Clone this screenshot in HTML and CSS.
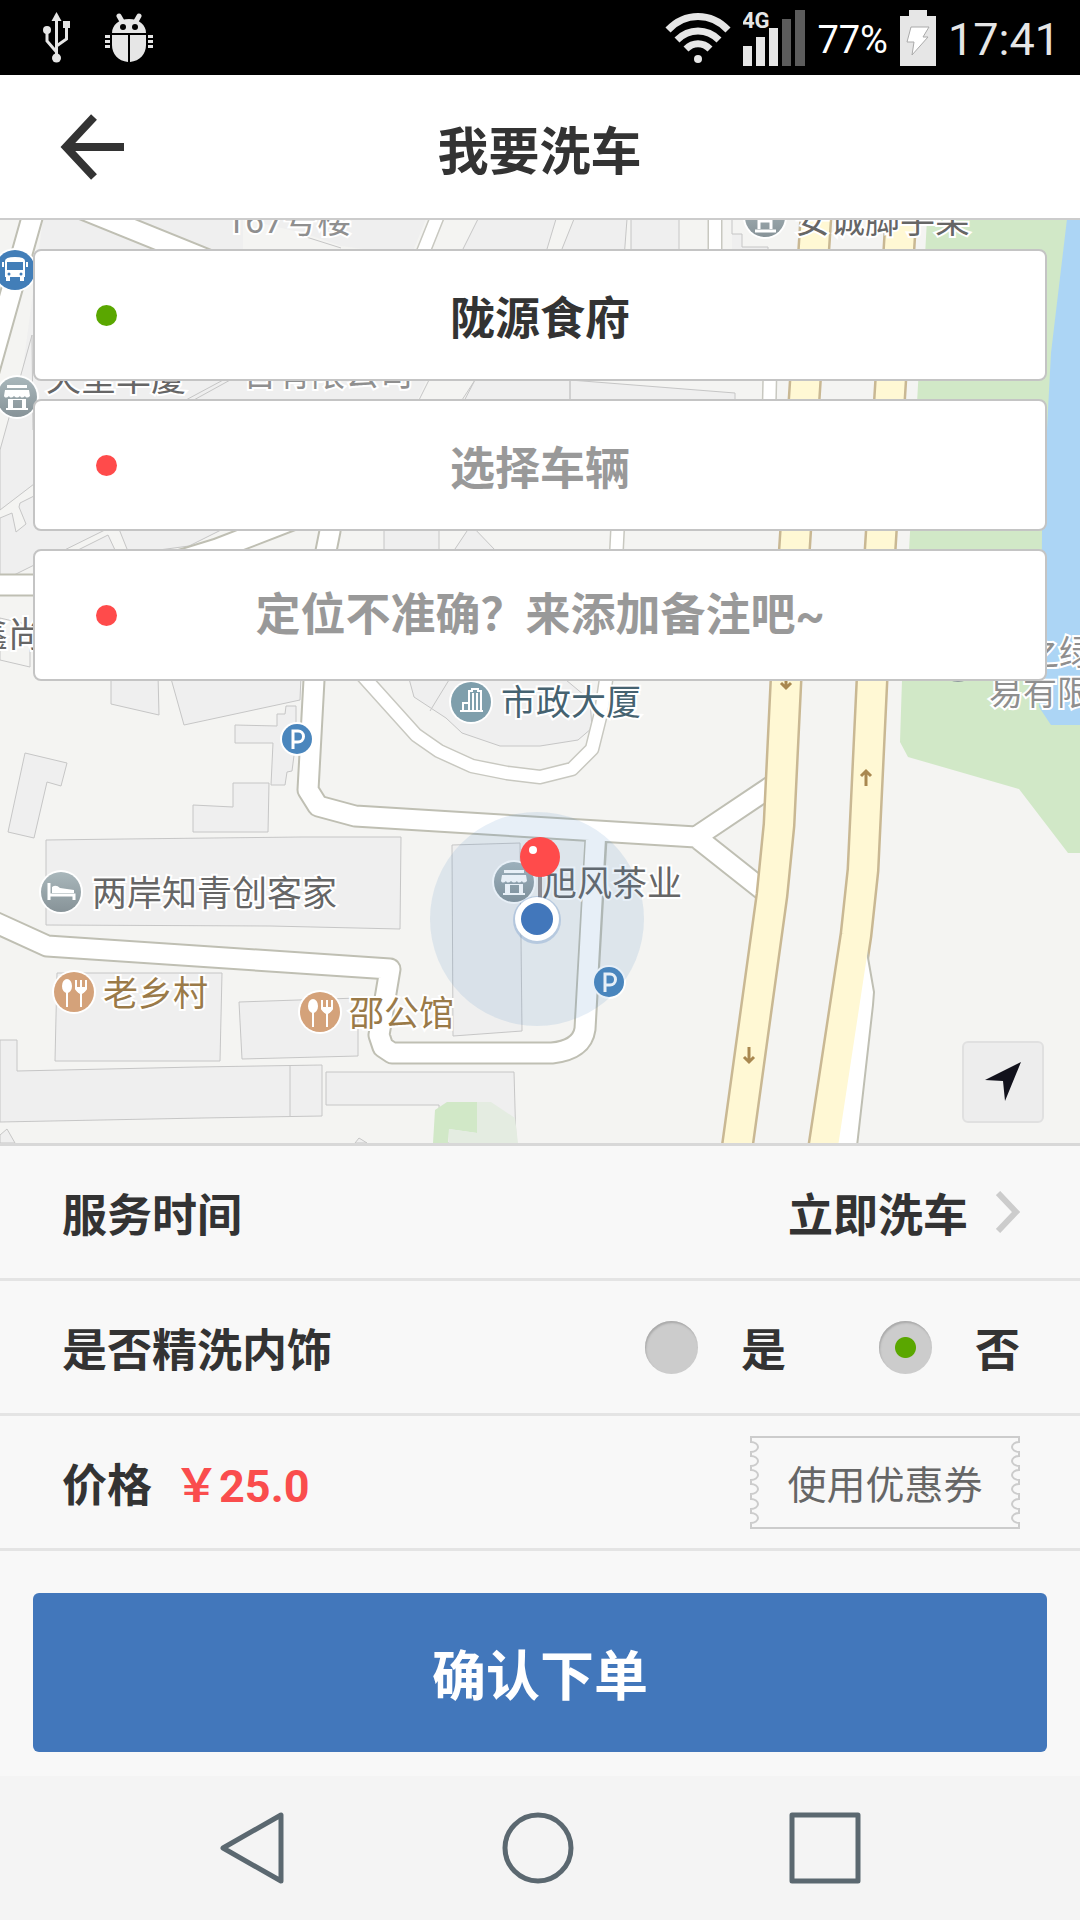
FILE: index.html
```html
<!DOCTYPE html>
<html lang="zh-CN">
<head>
  <meta charset="UTF-8">
  <meta name="viewport" content="width=device-width, initial-scale=1">
  <title>我要洗车</title>
  <link rel="stylesheet" href="styles.css">
</head>
<body>

<div class="status-bar">
  <div class="status-group">
    <svg class="usb-icon" width="28" height="52" viewBox="0 0 28 52" fill="none" stroke="#e6e6e6" stroke-width="3">
      <path d="M13.500 46V8M4 18v11l9.500 11M23.500 13v14L13.500 34"/>
      <g fill="#e6e6e6" stroke="none">
        <path d="M13.500 0l5 9h-10z"/>
        <circle cx="4" cy="18" r="4"/>
        <rect x="20" y="9" width="7" height="7"/>
        <circle cx="13.500" cy="46" r="4.500"/>
      </g>
    </svg>
    <svg width="48" height="50" viewBox="0 0 48 50">
      <g fill="#e6e6e6">
        <path d="M7 20C7 12 14 6 24 6s17 6 17 14z"/>
        <path d="M14 3l4 7M34 3l-4 7" stroke="#e6e6e6" stroke-width="5" stroke-linecap="round"/>
        <path d="M7 22h16v27C13 48 7 41 7 32zM25 22h16v10c0 9-6 16-16 17z"/>
        <path d="M0 22h5v3H0zM0 27h5v3H0zM0 32h5v3H0zM43 22h5v3h-5zM43 27h5v3h-5zM43 32h5v3h-5z"/>
      </g>
      <circle cx="18" cy="14" r="3"/>
      <circle cx="30" cy="14" r="3"/>
    </svg>
  </div>
  <div class="status-group status-right">
    <svg width="66" height="52" viewBox="0 0 66 52" fill="none" stroke="#e6e6e6" stroke-width="7">
      <path d="M3 18C20 0 46 0 63 18M12 28c12-12 30-12 42 0M21 37c7-7 17-7 24 0"/>
      <circle cx="33" cy="47" r="4" fill="#e6e6e6" stroke="none"/>
    </svg>
    <svg width="62" height="56" viewBox="0 0 62 56">
      <path d="M0 36h9v20H0zM13 27h9v29h-9zM26 18h9v38h-9z" fill="#e6e6e6"/>
      <path d="M39 9h9v47h-9zM52 0h10v56H52z" fill="#5c5c5c"/>
      <text class="network" x="-1" y="18">4G</text>
    </svg>
    <span class="battery-level">77%</span>
    <svg width="36" height="56" viewBox="0 0 36 56">
      <path d="M9 0h18v6h9v50H0V6h9z" fill="#e6e6e6"/>
      <path d="M11 17h18l-6 10h5L12 45l2-13H7z" fill="#fff" stroke="#aaa" stroke-width="1"/>
    </svg>
    <span class="clock">17:41</span>
  </div>
</div>

<header class="header">
  <button class="back" type="button" aria-label="返回">
    <svg width="64" height="66" viewBox="0 0 64 66" fill="none" stroke="#333" stroke-width="8">
      <path d="M34 3L6 33l28 30M8 33h56"/>
    </svg>
  </button>
  <h1>我要洗车</h1>
</header>

<section class="map">
  <svg class="map-canvas" viewBox="0 220 1080 923" preserveAspectRatio="xMidYMin slice">
    <defs>
      <linearGradient id="grey" x1="0" y1="0" x2="0" y2="1">
        <stop offset="0" stop-color="#a9b7bb"/>
        <stop offset="1" stop-color="#879398"/>
      </linearGradient>
      <g id="shop">
        <circle r="22" fill="#fff"/>
        <circle r="20" fill="url(#grey)"/>
        <path d="M-10-12h20v3h-20zM-12-7h24l1 6c-2 2-4 2-5 0-2 2-4 2-5 0-2 2-4 2-6 0-2 2-4 2-5 0-2 2-4 2-5 0zM-9 2H9v9H5V3H-4v8h-5zM-11 11H11v2H-11z" fill="#fff"/>
      </g>
      <g id="food">
        <circle r="22" fill="#fff"/>
        <circle r="20" fill="#d4a27a"/>
        <ellipse cx="-7" cy="-6" rx="5" ry="7" fill="#fff"/>
        <path d="M-7 0v15M7 0v15M2-12v9q5 7 10 0v-9M7-12v12" fill="none" stroke="#fff" stroke-width="2"/>
        <path d="M2-5h10q-1 7-5 7t-5-7z" fill="#fff"/>
      </g>
      <g id="parking">
        <circle r="17" fill="#fff"/>
        <circle r="15" fill="#4a86bd"/>
        <path d="M-4 10V-8h5a5 5 0 0 1 0 11h-5" fill="none" stroke="#fff" stroke-width="3"/>
      </g>
      <path id="oneway" d="M0-8V7M-5 2l5 5 5-5" fill="none" stroke="#a98850" stroke-width="3"/>
    </defs>

    <rect y="220" width="1080" height="923" fill="#f4f4f2"/>

    <!-- buildings -->
    <g fill="#efefef" stroke="#c6c6c6" stroke-width="1">
      <path d="M43 219h383l-15 37-70-10-38-13-60-14v140l-30 60H30l-10-30z" stroke="none"/>
      <path d="M303 236l38 12M478 219l-25 50h88l15-50zM574 219l-16 40h66l3-40M631 219v50h48v-50"/>
      <path d="M732 219v15h10v13h26v60H732"/>
      <path d="M60 375h369l-14 30H60z" stroke="none"/>
      <path d="M184 401l41-22M192 401l40-22M429 380l-10 20M475 380l-13 20"/>
      <path d="M32 335L0 450v60l34-26v12L20 503l-1 4 7 17-10 8-4-19-12 5v57h14l103-51 12 30 60-8 40-20V430H33z"/>
      <path d="M78 550l30-15 7 15"/>
      <path d="M475 380l-13 25h108v-25zM570 380l165 13v12H570z"/>
      <path d="M384 525h55v30h-55zM451 555l20-30 24 25"/>
      <path d="M111 675v29l48 11-1-40zM170 675l14 50 116-25 1-25z"/>
      <path d="M286 706h10v34l-4 31-5 1-2 13h-14l2-42h-38v-18l42 1v-12h8z"/>
      <path d="M25 753l42 10-6 23-14-4-13 56-26-6zM193 805l40 2v-24h36l-1 49h-75z"/>
      <path d="M408 675l6 22 32 21 16 15 38 13h40l38-6 14-12-2-28-30-25zM430 711l22-36"/>
      <path d="M46 840l78-1 178-2h99l-1 92-130-3-224-1zM452 845l68-2 2 188-69 5z"/>
      <path d="M57 973h165l-2 88H55zM239 1002l119-4v58l-116 3z"/>
      <path d="M0 1040h17v31l180-4 125-2v51l-120 2L0 1122zM290 1065v51M326 1072h188l2 71H440l-1-38H326z"/>
      <path d="M0 1135l7-6 8 14H0zM355 1143l4-5 8 5z"/>
      <path d="M0 618l30 7v42l-30-7z" fill="none"/>
    </g>

    <!-- park and water -->
    <path d="M927 219h153v634h-12l-49-64-111-32-8-15 2-62z" fill="#d1e8c7"/>
    <path d="M1067 219h13v506h-29l-12-18 2-27 1-149 6-121 3-57z" fill="#acd5f5"/>
    <path d="M435 1110l12-8h30v31l-28-4-1 14h-15z" fill="#d1e8c7"/>
    <path d="M477 1102h14l24 16 3 25h-69v-14l28 4z" fill="#e4ece1"/>

    <!-- small streets -->
    <g fill="none" stroke-linejoin="round">
      <path d="M446 195l-32 80M715 210v50M770 370l-1 45M618 520l-2 40-10 120-5 33-9 36-20 20-32 8-33-4-35-7-33-15-23-16-54-60-60-62" stroke="#c8c8c0" stroke-width="15"/>
      <path d="M446 195l-32 80M715 210v50M770 370l-1 45M618 520l-2 40-10 120-5 33-9 36-20 20-32 8-33-4-35-7-33-15-23-16-54-60-60-62" stroke="#fff" stroke-width="12"/>
    </g>

    <!-- streets: casing first, then fill -->
    <g fill="none" stroke-linejoin="round">
      <path d="M37 200L-15 385M60 200l200 81M-10 585h110l117-36 83-32M333 500l-3 31-4 20-12 129-6 110 10 16 37 10 341 21 76-51M696 837l67 53M-10 920l57 26 343 23-11 66 4 12 9 6h160q30-3 33-24l11-190" stroke="#bfbfb3" stroke-width="23"/>
      <path d="M37 200L-15 385M60 200l200 81M-10 585h110l117-36 83-32M333 500l-3 31-4 20-12 129-6 110 10 16 37 10 341 21 76-51M696 837l67 53M-10 920l57 26 343 23-11 66 4 12 9 6h160q30-3 33-24l11-200" stroke="#fff" stroke-width="19"/>
    </g>

    <!-- main road -->
    <g fill="none">
      <path d="M817 200l-31 480-7 145-7 70-40 290M902 200l-30 480-9 190-7 65-38 250" stroke="#c9b893" stroke-width="33"/>
      <path d="M867 952l7 40-1 13-17 150h-26l26-203z" fill="#fff" stroke="#bfbfb3" stroke-width="2"/>
      <path d="M817 200l-31 480-7 145-7 70-40 290M902 200l-30 480-9 190-7 65-38 250" stroke="#fff8d4" stroke-width="28"/>
    </g>
    <use href="#oneway" x="786" y="681"/>
    <use href="#oneway" x="749" y="1055"/>
    <use href="#oneway" transform="translate(866 778) rotate(180)"/>

    <!-- places -->
    <g class="place">
      <text class="faint" x="226" y="233">167号楼</text>
      <text x="795" y="233">安诚脚手架</text>
      <text x="46" y="391">天堂华厦</text>
      <text class="faint" x="243" y="386">台有限公司</text>
      <text x="-27" y="647">鑫尚</text>
      <text class="office" x="501" y="715">市政大厦</text>
      <text x="92" y="906">两岸知青创客家</text>
      <text x="542" y="896">旭风茶业</text>
      <text class="dining" x="103" y="1006">老乡村</text>
      <text class="dining" x="349" y="1026">邵公馆</text>
      <text class="faint" x="1025" y="665">之绿</text>
      <text class="faint" x="989" y="705">易有限</text>
    </g>
    <g>
      <circle cx="765" cy="217" r="22" fill="#fff"/>
      <circle cx="765" cy="217" r="20" fill="url(#grey)"/>
      <path d="M759 215v14M771 215v14M755 231h21M759 221h12" fill="none" stroke="#fff" stroke-width="3"/>
    </g>
    <circle cx="958" cy="660" r="22" fill="#8f999d"/>
    <g>
      <circle cx="15" cy="270" r="22" fill="#fff"/>
      <circle cx="15" cy="270" r="20" fill="#427eb8"/>
      <path d="M5 261q0-4 10-4t10 4v16h-1v4h-4v-4H10v4H6v-4H5z" fill="#fff"/>
      <path d="M7 262h16v8H7z" fill="#427eb8"/>
      <circle cx="9" cy="274" r="1.500" fill="#427eb8"/>
      <circle cx="21" cy="274" r="1.500" fill="#427eb8"/>
      <path d="M3 262v5M27 262v5" stroke="#fff" stroke-width="2"/>
    </g>
    <use href="#shop" x="17" y="397"/>
    <use href="#shop" x="514" y="882"/>
    <g>
      <circle cx="471" cy="702" r="22" fill="#fff"/>
      <circle cx="471" cy="702" r="20" fill="#7f9fac"/>
      <path d="M460 711h23M463 710v-7h6M469 711v-20h3v-2h6v2h3v20M473 693v17M477 693v17" fill="none" stroke="#fff" stroke-width="2"/>
    </g>
    <g>
      <circle cx="61" cy="892" r="22" fill="#fff"/>
      <circle cx="61" cy="892" r="20" fill="url(#grey)"/>
      <path d="M49 883v17M49 895h25v5" fill="none" stroke="#fff" stroke-width="3"/>
      <path d="M52 887q4-3 8 1l14 2v3H52z" fill="#fff"/>
    </g>
    <use href="#food" x="74" y="992"/>
    <use href="#food" x="320" y="1012"/>
    <use href="#parking" x="297" y="739"/>
    <use href="#parking" x="609" y="982"/>

    <!-- current position -->
    <circle cx="537" cy="919" r="107" fill="#4285c4" fill-opacity=".13"/>
    <path d="M540 870v35" stroke="#8f8f96" stroke-width="4"/>
    <circle cx="540" cy="857" r="20" fill="#ff4b4b"/>
    <circle cx="533" cy="850" r="4" fill="#fff"/>
    <circle cx="537" cy="920" r="24" fill="#4277bb" fill-opacity=".25"/>
    <circle cx="537" cy="919" r="22" fill="#fff"/>
    <circle cx="537" cy="919" r="16" fill="#4277bb"/>
  </svg>

  <div class="cards">
    <button class="card" type="button">
      <span class="dot dot-ok"></span>
      <span>陇源食府</span>
    </button>
    <button class="card card-empty" type="button">
      <span class="dot"></span>
      <span>选择车辆</span>
    </button>
    <label class="card card-empty">
      <span class="dot"></span>
      <input type="text" name="remark" aria-label="备注" placeholder="定位不准确？来添加备注吧~">
    </label>
  </div>

  <button class="locate" type="button" aria-label="定位">
    <svg width="36" height="40" viewBox="0 0 36 40">
      <path d="M36 0L20 39l-2-20L0 18z" fill="#12121c"/>
    </svg>
  </button>
</section>

<form class="order">
  <div class="row">
    <span>服务时间</span>
    <button class="time" type="button">
      立即洗车
      <svg width="24" height="42" viewBox="0 0 24 42" fill="none" stroke="#ccc" stroke-width="6">
        <path d="M2 2l18 19L2 40"/>
      </svg>
    </button>
  </div>

  <div class="row" role="radiogroup" aria-labelledby="interior">
    <span id="interior">是否精洗内饰</span>
    <div class="options">
      <label class="option"><input type="radio" name="interior" value="yes">是</label>
      <label class="option"><input type="radio" name="interior" value="no" checked>否</label>
    </div>
  </div>

  <div class="row">
    <span>价格<span class="price">￥25.0</span></span>
    <button class="coupon" type="button">
      <svg width="270" height="93" viewBox="0 0 270 93" fill="none" stroke="#ccc" stroke-width="2">
        <path d="M1 1H269V6a7 5 0 0 0 0 10v4a7 5 0 0 0 0 10v4a7 5 0 0 0 0 10v4a7 5 0 0 0 0 10v5a7 5 0 0 0 0 10v4a7 5 0 0 0 0 10V92H1V87a7 5 0 0 0 0-10v-4a7 5 0 0 0 0-10v-5a7 5 0 0 0 0-10v-4a7 5 0 0 0 0-10v-4a7 5 0 0 0 0-10v-4a7 5 0 0 0 0-10z"/>
      </svg>
      使用优惠券
    </button>
  </div>

  <div class="actions">
    <button class="submit" type="submit">确认下单</button>
  </div>
</form>

<nav class="nav-bar">
  <button type="button" aria-label="后退">
    <svg width="72" height="72" viewBox="0 0 72 72" fill="none" stroke="#5b6870" stroke-width="5" stroke-linejoin="round">
      <path d="M66 3v66L8 36z"/>
    </svg>
  </button>
  <button type="button" aria-label="主页">
    <svg width="72" height="72" viewBox="0 0 72 72" fill="none" stroke="#5b6870" stroke-width="5">
      <circle cx="36" cy="36" r="33"/>
    </svg>
  </button>
  <button type="button" aria-label="最近任务">
    <svg width="72" height="72" viewBox="0 0 72 72" fill="none" stroke="#5b6870" stroke-width="5" stroke-linejoin="round">
      <rect x="3" y="3" width="66" height="66"/>
    </svg>
  </button>
</nav>

</body>
</html>
```
FILE: styles.css
```css
* {
  box-sizing: border-box;
}

body {
  margin: 0;
  min-height: 100vh;
  display: flex;
  flex-direction: column;
  background-color: #f8f8f8;
  color: #333;
  font-family: Roboto, "Noto Sans CJK SC", sans-serif;
  font-size: 45px;
  font-weight: bold;
}

button,
input {
  padding: 0;
  border: none;
  background: none;
  color: inherit;
  font: inherit;
}

button {
  cursor: pointer;
}

svg {
  display: block;
  flex: none;
}

/* status bar */
.status-bar {
  height: 75px;
  padding: 0 20px 0 43px;
  display: flex;
  justify-content: space-between;
  align-items: center;
  background: #000;
  color: #e6e6e6;
  font-weight: normal;
}

.status-group {
  display: flex;
  align-items: center;
  gap: 34px;
}

.status-right {
  gap: 12px;
}

.status-right span {
  padding-top: 4px;
}

.network {
  fill: #e6e6e6;
  font-size: 22px;
  font-weight: bold;
}

.battery-level {
  color: #fff;
  font-size: 38px;
}

.clock {
  font-size: 45px;
}

/* header */
.header {
  height: 145px;
  padding: 0 61px 0 60px;
  display: grid;
  grid-template-columns: 1fr auto 1fr;
  align-items: center;
  background: #fff;
  border-bottom: 2px solid #ccc;
}

.back {
  justify-self: start;
}

h1 {
  margin: 0;
  padding-top: 12px;
  font-size: 51px;
  line-height: 60px;
}

/* map */
.map {
  flex: 1;
  position: relative;
  overflow: hidden;
  border-bottom: 3px solid #d8d8d8;
}

.map-canvas {
  position: absolute;
  top: 0;
  left: 0;
  width: 100%;
  height: 100%;
}

.place text {
  fill: #666;
  stroke: #fff;
  stroke-width: 4px;
  paint-order: stroke;
  font-size: 35px;
  font-weight: normal;
}

.place .faint {
  fill: #8f8f8f;
  font-size: 34px;
}

.place .office {
  fill: #456270;
}

.place .dining {
  fill: #9a7a48;
}

.cards {
  position: relative;
  padding: 29px 33px;
  display: flex;
  flex-direction: column;
  gap: 18px;
}

.card {
  height: 132px;
  padding: 0 41px;
  display: grid;
  grid-template-columns: 60px 1fr 60px;
  align-items: center;
  text-align: center;
  background: #fff;
  border: 2px solid #c4c4c4;
  border-radius: 8px;
}

.card-empty,
.card-empty input::placeholder {
  color: #999;
}

.card input {
  width: 100%;
  height: 66px;
  text-align: center;
  outline: none;
}

.dot {
  width: 21px;
  height: 21px;
  justify-self: center;
  border-radius: 50%;
  background: #ff4b4b;
}

.dot-ok {
  background: #5aa700;
}

.locate {
  position: absolute;
  right: 36px;
  bottom: 20px;
  width: 82px;
  height: 82px;
  display: flex;
  align-items: center;
  justify-content: center;
  background: #ededed;
  border: 2px solid #e0e0e0;
  border-radius: 6px;
}

/* order */
.row {
  height: 135px;
  padding: 0 60px 0 62px;
  display: flex;
  justify-content: space-between;
  align-items: center;
  border-bottom: 3px solid #e4e4e4;
}

.time {
  display: flex;
  align-items: center;
  gap: 28px;
}

.options {
  display: flex;
  gap: 93px;
}

.option {
  display: flex;
  align-items: center;
  gap: 43px;
}

.option input {
  appearance: none;
  width: 53px;
  height: 53px;
  margin: 0;
  border-radius: 50%;
  background: #ccc;
  box-shadow: inset 1px 2px 2px #aaa;
}

.option input:checked {
  background: radial-gradient(circle, #5aa700 10px, #ccc 11px);
}

.price {
  margin-left: 22px;
  color: #fa4d4d;
}

.coupon {
  position: relative;
  width: 270px;
  height: 93px;
  color: #666;
  font-size: 39px;
  font-weight: normal;
}

.coupon svg {
  position: absolute;
  top: 0;
  left: 0;
}

.actions {
  padding: 42px 33px 24px;
}

.submit {
  display: block;
  width: 100%;
  height: 159px;
  background: #4277bb;
  border-radius: 6px;
  color: #fff;
  font-size: 54px;
}

/* navigation */
.nav-bar {
  height: 144px;
  padding: 0 112px 0 108px;
  display: grid;
  grid-template-columns: repeat(3, 1fr);
  align-items: center;
  justify-items: center;
  background: #f4f4f4;
}
```
